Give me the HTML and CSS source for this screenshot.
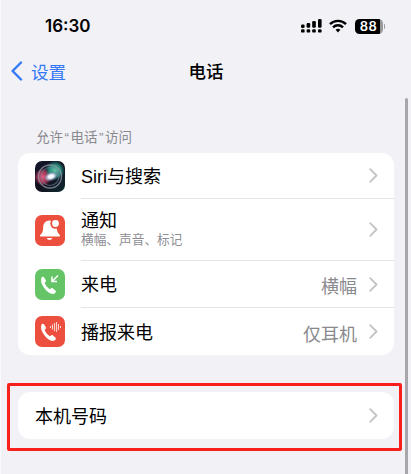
FILE: index.html
```html
<!DOCTYPE html>
<html lang="zh-CN">
<head>
<meta charset="utf-8">
<title>电话</title>
<link rel="stylesheet" href="styles.css">
</head>
<body>
<div class="page">
  <header class="status">
    <span class="time">16:30</span>
    <div class="status-icons">
      <svg class="signal" viewBox="0 0 21 14" width="21" height="14" aria-hidden="true">
        <g fill="#000">
          <rect x="0" y="5.5" width="3.6" height="3.4" rx="1.2"/><rect x="0" y="10.2" width="3.6" height="3.4" rx="1.2"/>
          <rect x="5.6" y="4" width="3.6" height="4.8" rx="1.2"/><rect x="5.6" y="10.2" width="3.6" height="3.4" rx="1.2"/>
          <rect x="11.2" y="2" width="3.6" height="6.8" rx="1.2"/><rect x="11.2" y="10.2" width="3.6" height="3.4" rx="1.2"/>
          <rect x="17" y="0" width="3.6" height="8.8" rx="1.2"/><rect x="17" y="10.2" width="3.6" height="3.4" rx="1.2"/>
        </g>
      </svg>
      <svg class="wifi" viewBox="0 0 18 14" width="18" height="14" aria-hidden="true">
        <g fill="none" stroke="#000" stroke-width="2.4">
          <path d="M1 5.2a11.4 11.4 0 0 1 16 0"/>
          <path d="M4 8.300a7.200 7.200 0 0 1 10 0"/>
        </g>
        <path d="M6.600 10.800a3.500 3.500 0 0 1 4.800 0L9 13.600z" fill="#000"/>
      </svg>
      <div class="battery"><span class="battery-level">88</span></div>
      <span class="battery-tip"></span>
    </div>
  </header>

  <nav class="nav">
    <a class="back">
      <svg viewBox="0 0 13 20" width="13" height="20" aria-hidden="true"><path d="M11 1.500 2.600 10l8.400 8.500" fill="none" stroke="#3478f6" stroke-width="2.400" stroke-linecap="round" stroke-linejoin="round"/></svg>
      <span>设置</span>
    </a>
    <h1 class="title">电话</h1>
  </nav>

  <main class="content">
    <p class="section-label">允许<span class="quote">“</span>电话<span class="quote">”</span>访问</p>
    <section class="card">
      <div class="row row-siri">
        <span class="icon icon-siri">
          <svg viewBox="0 0 30 31" aria-hidden="true">
            <defs>
              <radialGradient id="glow"><stop offset="0" stop-color="#fff"/><stop offset=".35" stop-color="#eef3fa"/><stop offset=".65" stop-color="#98a8c4" stop-opacity=".7"/><stop offset="1" stop-color="#4a5570" stop-opacity="0"/></radialGradient>
              <radialGradient id="pink"><stop offset="0" stop-color="#ee5a7c"/><stop offset=".6" stop-color="#c23e5f" stop-opacity=".8"/><stop offset="1" stop-color="#a83050" stop-opacity="0"/></radialGradient>
              <radialGradient id="teal"><stop offset="0" stop-color="#5cd0a8"/><stop offset=".6" stop-color="#2f9f8c" stop-opacity=".8"/><stop offset="1" stop-color="#1f7f78" stop-opacity="0"/></radialGradient>
            </defs>
            <circle cx="8" cy="16" r="9" fill="url(#pink)"/>
            <circle cx="20" cy="9.500" r="10" fill="url(#teal)"/>
            <circle cx="15" cy="15.500" r="11.500" fill="none" stroke="#8d94a2" stroke-opacity=".8" stroke-width="1.400"/>
            <circle cx="15" cy="15.500" r="9" fill="none" stroke="#7c8aa4" stroke-opacity=".6" stroke-width="1.200"/>
            <ellipse cx="16" cy="15.500" rx="8" ry="5" transform="rotate(-20 16 15.500)" fill="url(#glow)"/>
          </svg>
        </span>
        <div class="row-body"><span class="row-title">Siri与搜索</span><svg class="chevron" viewBox="0 0 9 15" width="9" height="15" aria-hidden="true"><path d="M1.200 1.200 7.500 7.500 1.200 13.800" /></svg></div>
      </div>
      <div class="row row-notify">
        <span class="icon icon-red">
          <svg viewBox="0 0 30 31" aria-hidden="true">
            <path d="M14.500 5.500c-4 0-6.300 3-6.300 6.800 0 3.800-1 6-3 7.800-.6.600-.2 1.400.6 1.400h18.400c.8 0 1.200-.8.600-1.400-2-1.800-3-4-3-7.800 0-3.800-2.300-6.800-7.300-6.800z" fill="#fff"/>
            <circle cx="20.500" cy="8.500" r="5.200" fill="#ec4f3d"/>
            <circle cx="20.500" cy="8.500" r="3.400" fill="#fff"/>
            <path d="M11.700 23h5.600c-.4 1.200-1.500 1.900-2.800 1.900s-2.400-.7-2.800-1.900z" fill="#fff"/>
          </svg>
        </span>
        <div class="row-body">
          <div class="stack"><span class="row-title row-title-tight">通知</span><span class="row-sub">横幅、声音、标记</span></div>
          <svg class="chevron" viewBox="0 0 9 15" width="9" height="15" aria-hidden="true"><path d="M1.200 1.200 7.500 7.500 1.200 13.800" /></svg>
        </div>
      </div>
      <div class="row row-call">
        <span class="icon icon-green">
          <svg viewBox="0 0 30 31" aria-hidden="true">
            <path d="M6.200 8.500c.9-1 2.300-1.100 2.900-.1l1.600 2.600c.4.700.3 1.400-.2 1.900l-1 1c.8 1.800 3.300 5.100 5.400 6.300l1.200-.8c.6-.4 1.300-.4 1.900.1l2.300 1.900c.9.700.7 2-.3 2.800-1.300 1-3.100 1.100-5 .1-3.400-1.700-6.700-5.800-8.300-9.700-.9-2.400-.8-4.700 0-6.100z" fill="#fff"/>
            <path d="M23 6.500 17 12.500M17 7.500v5h5" fill="none" stroke="#fff" stroke-width="1.500"/>
          </svg>
        </span>
        <div class="row-body"><span class="row-title">来电</span><span class="row-value">横幅</span><svg class="chevron" viewBox="0 0 9 15" width="9" height="15" aria-hidden="true"><path d="M1.200 1.200 7.500 7.500 1.200 13.800" /></svg></div>
      </div>
      <div class="row row-announce">
        <span class="icon icon-red">
          <svg viewBox="0 0 30 31" aria-hidden="true">
            <path d="M6.200 8.500c.9-1 2.300-1.100 2.900-.1l1.600 2.600c.4.700.3 1.400-.2 1.900l-1 1c.8 1.800 3.300 5.100 5.400 6.300l1.200-.8c.6-.4 1.300-.4 1.900.1l2.300 1.900c.9.700.7 2-.3 2.800-1.300 1-3.100 1.100-5 .1-3.400-1.700-6.700-5.800-8.300-9.700-.9-2.400-.8-4.700 0-6.100z" fill="#fff"/>
            <path d="M15.500 10v2M17.500 8.500v5M19.500 7v8M21.500 6v10M23.500 8v6M25.500 10v2" stroke="#fff" stroke-opacity=".75" stroke-width="1.100" fill="none"/>
          </svg>
        </span>
        <div class="row-body row-last"><span class="row-title">播报来电</span><span class="row-value">仅耳机</span><svg class="chevron" viewBox="0 0 9 15" width="9" height="15" aria-hidden="true"><path d="M1.200 1.200 7.500 7.500 1.200 13.800" /></svg></div>
      </div>
    </section>

    <section class="card card-number">
      <div class="row row-number">
        <div class="row-body row-last"><span class="row-title">本机号码</span><svg class="chevron" viewBox="0 0 9 15" width="9" height="15" aria-hidden="true"><path d="M1.200 1.200 7.500 7.500 1.200 13.800" /></svg></div>
      </div>
      <div class="highlight"></div>
    </section>
  </main>

  <div class="scrollbar"></div>
</div>
</body>
</html>
```

FILE: styles.css
```css
* { box-sizing: border-box; }
html, body { margin: 0; height: 100%; }
body {
  background: #f1f1f6;
  color: #000;
  font-family: "Liberation Sans", "Noto Sans CJK SC", sans-serif;
  overflow: hidden;
}
.page { position: relative; height: 474px; overflow: hidden; border-left: 1px solid #fafafc; }

.status {
  height: 52px;
  display: flex;
  align-items: center;
  justify-content: space-between;
  padding: 0 26px 0 44px;
}
.time { font-family: Inter, sans-serif; font-weight: 600; font-size: 17px; }
.status-icons { display: flex; align-items: center; }
.signal { margin-right: 7px; }
.wifi { margin-right: 8px; }
.battery {
  width: 28px;
  height: 15px;
  border-radius: 4.500px;
  background: linear-gradient(90deg, #000 88%, #9a9a9e 88%);
  display: flex;
  align-items: center;
  justify-content: center;
}
.battery-level { color: #fff; font-family: Inter, sans-serif; font-size: 13px; font-weight: 600; letter-spacing: .4px; }
.battery-tip { width: 1.500px; height: 5px; margin-left: 1px; background: #9a9a9e; border-radius: 0 1px 1px 0; }

.nav {
  height: 38px;
  position: relative;
  display: flex;
  align-items: center;
  justify-content: center;
}
.back {
  position: absolute;
  left: 9px;
  top: 0;
  height: 100%;
  display: flex;
  align-items: center;
  gap: 8px;
  color: #3478f6;
  font-size: 17.500px;
}
.title { margin: 0; padding-top: 3px; font-size: 17.500px; font-weight: 500; line-height: 1; }

.content { padding: 40px 17px 0; }
.section-label {
  margin: 0 0 7px;
  padding-left: 18px;
  font-size: 13.500px;
  line-height: 16px;
  color: #8a8a8e;
}
.quote { padding: 0 1.500px; }
.card { position: relative; background: #fff; border-radius: 12px; }
.card-number { margin-top: 37px; }

.row { display: flex; align-items: center; padding-left: 17px; }
.row-siri .row-body { height: 46px; }
.row-notify .row-body { height: 62px; }
.row-call .row-body { height: 47px; }
.row-announce .row-body { height: 47px; }
.row-number .row-body { height: 47px; }

.icon { flex: none; width: 30px; height: 31px; border-radius: 7px; margin-right: 16px; overflow: hidden; display: block; }
.icon svg { display: block; height: 100%; width: 100%; }
.icon-siri { background: linear-gradient(135deg, #16162c, #10101e 50%, #0f2a30); }
.icon-red { background: #ec4f3d; }
.icon-green { background: #65c466; }

.row-body {
  flex: 1;
  display: flex;
  align-items: center;
  border-bottom: 1px solid #e5e5e9;
  padding-right: 16px;
}
.row-last { border-bottom: 0; }
.row-title { font-size: 18px; line-height: 20px; flex: none; padding-top: 2px; }
.row-title-tight { padding-top: 0; }
.stack { display: flex; flex-direction: column; }
.row-sub { margin-top: 1px; font-size: 12.700px; line-height: 16px; color: #8e8e93; }
.row-value { margin-left: auto; font-size: 18px; color: #8a8a8e; padding-top: 2px; }
.chevron { margin-left: auto; flex: none; fill: none; stroke: #c4c4c8; stroke-width: 1.800; stroke-linecap: round; stroke-linejoin: round; }
.row-value + .chevron { margin-left: 12px; }

.highlight {
  position: absolute;
  left: -11px;
  right: -8px;
  top: -9px;
  bottom: -12px;
  border: 3px solid #f8201a;
  border-radius: 2px;
  pointer-events: none;
}
.scrollbar {
  position: absolute;
  left: 404px;
  top: 98px;
  bottom: 0;
  width: 3px;
  background: #a6a6ab;
  border-radius: 2px 2px 0 0;
}
```
